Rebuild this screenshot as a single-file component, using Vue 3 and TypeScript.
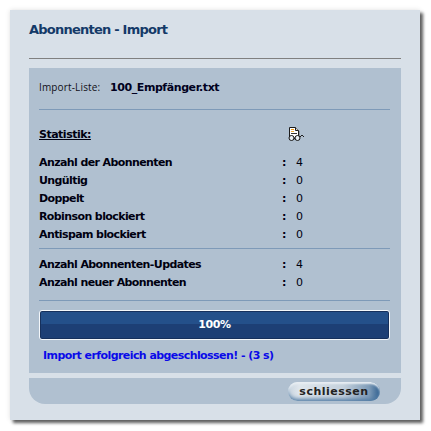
<template>
  <div class="page">
    <div class="dialog">
      <h1 class="title">Abonnenten - Import</h1>
      <div class="title-rule"></div>

      <div class="content">
        <div class="file-row">
          <span class="file-label">Import-Liste:</span>
          <span class="file-name">100_Empfänger.txt</span>
        </div>
        <div class="rule file-rule"></div>

        <div class="stat-head">
          <span class="stat-title">Statistik:</span>
          <svg class="report-icon" viewBox="0 0 17 15" width="17" height="15" aria-hidden="true">
            <path d="M11 4h1v8h-1zM3 12h8v1H3z" fill="#8d97a3" />
            <path d="M1.500 .5h6l3 3v8h-9z" fill="#fff" stroke="#1c1c1c" />
            <path d="M7.500 .5v3h3" fill="#d8d8d8" stroke="#1c1c1c" />
            <rect x="3" y="2" width="3" height="1" fill="#f09a1a" />
            <rect x="3" y="4" width="3" height="1" fill="#f0b040" />
            <rect x="3" y="6" width="6" height="1" fill="#333" />
            <circle cx="3.500" cy="11" r="2.500" fill="#e8eef3" stroke="#111" />
            <circle cx="9.500" cy="11" r="2.500" fill="#e8eef3" stroke="#111" />
            <path d="M6 11h1M12 10l2-2 2 2" fill="none" stroke="#222" />
          </svg>
        </div>

        <div class="stats">
          <div v-for="row in firstRows" :key="row.label" class="stat-row">
            <span class="stat-label">{{ row.label }}</span>
            <span class="stat-colon">:</span>
            <span class="stat-value">{{ row.value }}</span>
          </div>
        </div>
        <div class="rule"></div>
        <div class="stats second">
          <div v-for="row in secondRows" :key="row.label" class="stat-row">
            <span class="stat-label">{{ row.label }}</span>
            <span class="stat-colon">:</span>
            <span class="stat-value">{{ row.value }}</span>
          </div>
        </div>
        <div class="rule last-rule"></div>

        <div class="progress">100%</div>
        <div class="message">Import erfolgreich abgeschlossen! - (3 s)</div>
      </div>

      <div class="footer">
        <button class="close-btn" type="button">schliessen</button>
      </div>
    </div>
  </div>
</template>

<script setup lang="ts">
interface StatRow {
  label: string
  value: number
}

const firstRows: StatRow[] = [
  { label: 'Anzahl der Abonnenten', value: 4 },
  { label: 'Ungültig', value: 0 },
  { label: 'Doppelt', value: 0 },
  { label: 'Robinson blockiert', value: 0 },
  { label: 'Antispam blockiert', value: 0 },
]

const secondRows: StatRow[] = [
  { label: 'Anzahl Abonnenten-Updates', value: 4 },
  { label: 'Anzahl neuer Abonnenten', value: 0 },
]
</script>

<style>
html,
body {
  margin: 0;
  background: #fff;
}
</style>

<style scoped>
.page {
  width: 431px;
  height: 431px;
  padding: 10px 11px 11px 10px;
  box-sizing: border-box;
  font-family: "DejaVu Sans", Verdana, sans-serif;
}

.dialog {
  width: 410px;
  height: 410px;
  box-sizing: border-box;
  padding: 0 19px;
  background: #d8e0e8;
  box-shadow: 3px 3px 3px #5f5f5f, 0 0 5px rgba(0, 0, 0, 0.12);
}

.title {
  margin: 0;
  height: 48px;
  padding-top: 11px;
  box-sizing: border-box;
  font-size: 13px;
  line-height: 17px;
  font-weight: bold;
  letter-spacing: -0.77px;
  color: #143a68;
}

.title-rule {
  height: 1px;
  background: #808080;
}

.content {
  margin-top: 9px;
  height: 305px;
  box-sizing: border-box;
  padding: 11px 11px 0 10px;
  background: #b0c0d0;
  color: #000010;
}

.file-row {
  display: flex;
  align-items: center;
  height: 16px;
}

.file-label {
  width: 71px;
  font-family: "Open Sans", sans-serif;
  font-size: 10px;
  letter-spacing: 0.15px;
  color: #101018;
}

.file-name {
  font-size: 11px;
  font-weight: bold;
  letter-spacing: -0.42px;
  color: #000020;
}

.rule {
  height: 1px;
  background: #7e9ab8;
}

.file-rule {
  margin-top: 14px;
}

.stat-head {
  display: flex;
  align-items: center;
  height: 16px;
  margin-top: 16px;
}

.stat-title {
  width: 249px;
  font-size: 11px;
  font-weight: bold;
  letter-spacing: -0.5px;
  text-decoration: underline;
}

.report-icon {
  flex: none;
}

.stats {
  margin-top: 11px;
  margin-bottom: 5px;
}

.stats.second {
  margin-top: 6px;
  margin-bottom: 9px;
}

.stat-row {
  display: flex;
  align-items: center;
  height: 18px;
  font-size: 11px;
}

.stat-label {
  width: 243px;
  font-weight: bold;
  letter-spacing: -0.6px;
}

.stat-colon {
  width: 14px;
  font-weight: bold;
}

.stat-value {
  font-size: 11px;
}

.last-rule {
  margin-bottom: 9px;
}

.progress {
  height: 30px;
  box-sizing: border-box;
  border: 1px solid #f4f7fa;
  border-radius: 3px;
  background: linear-gradient(#24508a 0 47%, #1d3f75 47% 100%);
  box-shadow: inset 0 0 0 1px #16305c;
  color: #fff;
  font-size: 11px;
  font-weight: bold;
  letter-spacing: -0.4px;
  line-height: 28px;
  text-align: center;
}

.message {
  margin-top: 8px;
  padding-left: 4px;
  font-size: 11px;
  line-height: 16px;
  font-weight: bold;
  letter-spacing: -0.57px;
  color: #0a0ae8;
}

.footer {
  display: flex;
  justify-content: flex-end;
  align-items: center;
  height: 26px;
  margin-top: 5px;
  padding-right: 21px;
  box-sizing: border-box;
  background: #b0c0d0;
  border-radius: 0 0 16px 16px;
}

.close-btn {
  width: 92px;
  height: 19px;
  padding: 0;
  border: 0;
  border-radius: 10px;
  background: linear-gradient(90deg, #c8d4df 0, #dfe6ec 12%, #c4d0dc 60%, #7f9cb8 88%, #2f5f8f 100%);
  box-shadow: inset 0 -4px 4px -2px #4f7aa3, inset 0 2px 2px #e8eef3;
  color: #222;
  font-family: "DejaVu Sans", Verdana, sans-serif;
  font-size: 11px;
  font-weight: bold;
  letter-spacing: 0.5px;
}
</style>
